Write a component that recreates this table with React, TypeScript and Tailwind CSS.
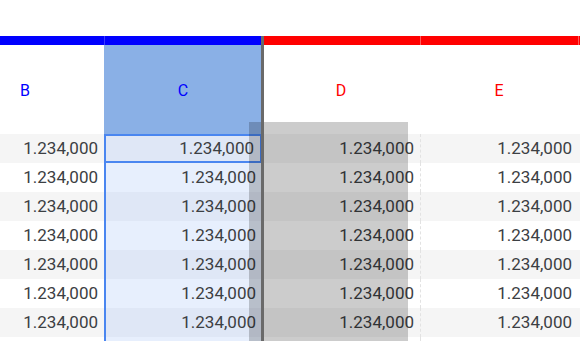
const columns = [
  { key: "B", bar: "bg-[#0000ff]", sep: "border-[#3a3aff]", text: "text-[#0000ff]" },
  { key: "C", bar: "bg-[#0000ff]", sep: "border-[#3a3aff]", text: "text-[#0000ff]" },
  { key: "D", bar: "bg-[#ff0000]", sep: "border-[#ff5a5a]", text: "text-[#ff0000]" },
  { key: "E", bar: "bg-[#ff0000]", sep: "border-[#ff5a5a]", text: "text-[#ff0000]" },
  { key: "F", bar: "bg-[#ff0000]", sep: "border-[#ff5a5a]", text: "text-[#ff0000]" },
];

const rows = [0, 1, 2, 3, 4, 5, 6];

function Cell({ col, row, h = "h-[29px]" }: { col: string; row: number; h?: string }) {
  const even = row % 2 === 0;
  let cls = even ? "bg-[#f5f5f5]" : "bg-white";
  if (col === "C") {
    cls = even ? "bg-[#dfe7f6] border-l-2 border-[#4a86f0]" : "bg-[#e7effd] border-l-2 border-[#4a86f0]";
    if (row === 0) cls = "bg-[#dfe7f6] border-2 border-[#4a86f0]";
  }
  if (col === "E") cls += " border-l border-dashed border-[#e2e2e2]";
  const showText = col !== "F" && h === "h-[29px]";
  return (
    <div className={`flex ${h} w-[158px] shrink-0 items-center justify-end pr-[6px] ${cls}`}>
      {showText && <span className="text-[17px] text-[#3c4043]">1.234,000</span>}
    </div>
  );
}

export default function App() {
  return (
    <div className="relative h-[341px] w-[580px] overflow-hidden bg-white font-['Roboto',sans-serif]">
      <div className="h-9" />
      <div className="-ml-[54px]">
        <div className="flex h-[9px]">
          {columns.map((c) => (
            <div key={c.key} className={`w-[158px] shrink-0 border-l ${c.bar} ${c.sep}`} />
          ))}
        </div>
        <div className="flex h-[89px]">
          {columns.map((c) => (
            <div
              key={c.key}
              className={`flex w-[158px] shrink-0 items-center justify-center pt-[3px] text-[16px] ${c.text} ${
                c.key === "C" ? "bg-[#8ab0e6]" : "bg-white"
              }`}
            >
              {c.key === "F" ? "" : c.key}
            </div>
          ))}
        </div>
        {rows.map((r) => (
          <div key={r} className="flex">
            {columns.map((c) => (
              <Cell key={c.key} col={c.key} row={r} />
            ))}
          </div>
        ))}
        {/* partially visible next row */}
        <div className="flex">
          {columns.map((c) => (
            <Cell key={c.key} col={c.key} row={7} h="h-[4px]" />
          ))}
        </div>
      </div>

      {/* drag ghost */}
      <div className="absolute left-[249px] top-[122px] bottom-0 w-[159px] bg-black/20" />
      {/* drop indicator */}
      <div className="absolute left-[261px] top-[36px] bottom-0 w-[3px] bg-[#6a6a6a]" />
    </div>
  );
}
